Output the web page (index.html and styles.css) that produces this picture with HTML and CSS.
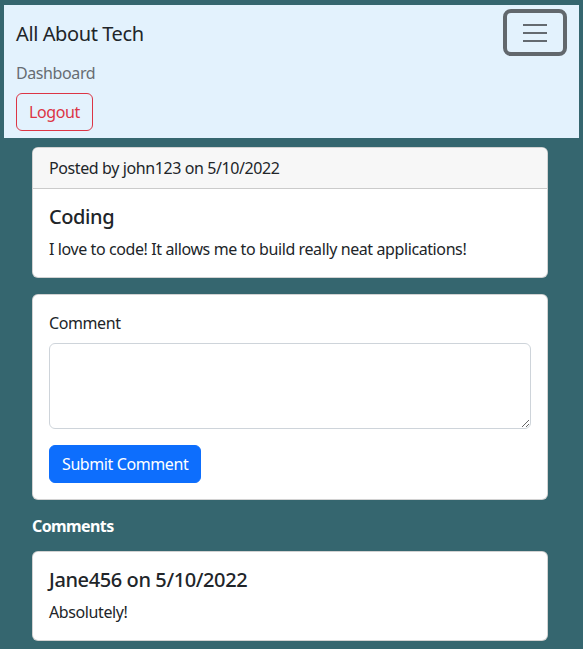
FILE: index.html
```html
<!DOCTYPE html>
<html lang="en">
<head>
<meta charset="utf-8">
<title>All About Tech</title>
<link rel="stylesheet" href="styles.css">
</head>
<body>
<nav class="navbar">
  <div class="nav-top">
    <a class="brand" href="#">All About Tech</a>
    <button class="toggler" type="button" aria-label="Toggle navigation">
      <svg width="24" height="20" viewBox="0 0 24 20">
        <path d="M0 2h24M0 10h24M0 18h24" stroke="#646a70" stroke-width="2.2" fill="none"/>
      </svg>
    </button>
  </div>
  <a class="nav-link" href="#">Dashboard</a>
  <button class="btn btn-outline-danger" type="button">Logout</button>
</nav>

<main class="main">
  <section class="card post-card">
    <div class="card-header">Posted by john123 on 5/10/2022</div>
    <div class="card-body">
      <h5 class="card-title">Coding</h5>
      <p class="card-text">I love to code! It allows me to build really neat applications!</p>
    </div>
  </section>

  <section class="card form-card">
    <form class="card-body">
      <label class="form-label" for="comment">Comment</label>
      <textarea id="comment" class="form-control" rows="3"></textarea>
      <button class="btn btn-primary" type="button">Submit Comment</button>
    </form>
  </section>

  <h6 class="comments-title">Comments</h6>

  <section class="card">
    <div class="card-body">
      <h5 class="card-title">Jane456 on 5/10/2022</h5>
      <p class="card-text">Absolutely!</p>
    </div>
  </section>
</main>
</body>
</html>
```

FILE: styles.css
```css
* { box-sizing: border-box; }

html, body {
  margin: 0;
  background: #35666f;
}

body {
  padding: 5px 4px 0 4px;
  font-family: "Noto Sans", "Open Sans", sans-serif;
  font-size: 16px;
  line-height: 24px;
  letter-spacing: -0.4px;
  color: #212529;
}

.navbar {
  background: #e3f2fd;
  padding: 4px 12px 7px 12px;
  display: flex;
  flex-direction: column;
  align-items: flex-start;
}

.nav-top {
  align-self: stretch;
  display: flex;
  justify-content: space-between;
  align-items: center;
}

.brand {
  font-size: 20px;
  line-height: 30px;
  color: #212529;
  text-decoration: none;
  margin-top: 2px;
}

.toggler {
  width: 64px;
  height: 47px;
  border: 4px solid #62686d;
  border-radius: 8px;
  background: transparent;
  display: flex;
  align-items: center;
  justify-content: center;
  padding: 0;
}

.nav-link {
  margin-top: 5px;
  color: #676d72;
  text-decoration: none;
}

.btn {
  font-family: inherit;
  font-size: 16px;
  line-height: 24px;
  letter-spacing: -0.4px;
  padding: 6px 12px;
  border-radius: 6px;
  border: 1px solid transparent;
  cursor: pointer;
}

.btn-outline-danger {
  margin-top: 8px;
  color: #dc3545;
  border-color: #dc3545;
  background: transparent;
}

.btn-primary {
  color: #fff;
  background: #0d6efd;
  border-color: #0d6efd;
}

.main {
  padding: 9px 31px 0 28px;
  display: flex;
  flex-direction: column;
}

.card {
  background: #fff;
  border: 1px solid rgba(0, 0, 0, 0.175);
  border-radius: 6px;
  overflow: hidden;
}

.form-card { margin-top: 16px; }

.card-header {
  background: #f7f7f7;
  padding: 8px 16px;
  border-bottom: 1px solid rgba(0, 0, 0, 0.175);
}

.card-body {
  padding: 16px;
  display: flex;
  flex-direction: column;
  align-items: flex-start;
}

.card-title {
  margin: 0 0 8px 0;
  font-size: 20px;
  line-height: 24px;
  font-weight: 500;
}

.card-text { margin: 0; }

.form-label { margin-bottom: 8px; }

.form-control {
  align-self: stretch;
  height: 86px;
  border: 1px solid #ced4da;
  border-radius: 6px;
  padding: 6px 12px;
  font-family: inherit;
  font-size: 16px;
  line-height: 24px;
  margin-bottom: 16px;
  resize: vertical;
}

.comments-title {
  margin: 15px 0 14px 0;
  color: #fff;
  font-size: 16px;
  line-height: 22px;
  font-weight: 700;
  letter-spacing: -0.6px;
}
```
